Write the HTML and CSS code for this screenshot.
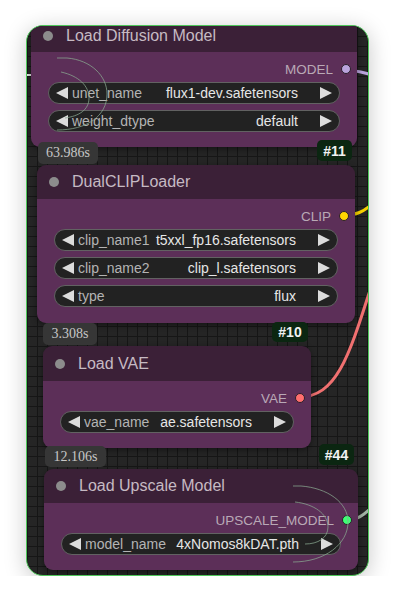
FILE: index.html
```html
<!DOCTYPE html>
<html>
  <head>
    <meta http-equiv="Content-Type" content="text/html; charset=utf-8" />
    <meta name="viewport" content="width=device-width, initial-scale=1" />
    <title>workflow</title>
    <link rel="stylesheet" href="styles.css">
  </head>
  <body>
    <div class="canvas">
      <svg class="wires" width="341" height="549" viewBox="0 0 341 549">
        <path d="M-2,49 L4,49" stroke="#e8e8e8" stroke-width="2" fill="none" />
        <path d="M316,44 C330,44 334,46 345,49" stroke="#b9a3dc" stroke-width="3" fill="none" />
        <path d="M316,189 C330,189 336,186 345,178" stroke="#f5d000" stroke-width="3" fill="none" />
        <path d="M272,371 C310,371 322,330 345,258" stroke="#f07070" stroke-width="3" fill="none" />
        <path d="M318,494 C330,494 336,490 345,481" stroke="#a3b3a5" stroke-width="3" fill="none" />
      </svg>

      <div class="node n1">
        <div class="title"><span class="dot"></span>Load Diffusion Model</div>
        <div class="body">
          <div class="output">MODEL <span class="slot model"></span></div>
          <div class="widget">
            <span class="arrow left"></span><span class="label">unet_name</span>
            <span class="value">flux1-dev.safetensors</span><span class="arrow right"></span>
          </div>
          <div class="widget">
            <span class="arrow left"></span><span class="label">weight_dtype</span>
            <span class="value">default</span><span class="arrow right"></span>
          </div>
        </div>
      </div>
      <div class="badge time t1">63.986s</div>
      <div class="badge id i1">#11</div>

      <div class="node n2">
        <div class="title"><span class="dot"></span>DualCLIPLoader</div>
        <div class="body">
          <div class="output">CLIP <span class="slot clip"></span></div>
          <div class="widget">
            <span class="arrow left"></span><span class="label">clip_name1</span>
            <span class="value">t5xxl_fp16.safetensors</span><span class="arrow right"></span>
          </div>
          <div class="widget">
            <span class="arrow left"></span><span class="label">clip_name2</span>
            <span class="value">clip_l.safetensors</span><span class="arrow right"></span>
          </div>
          <div class="widget">
            <span class="arrow left"></span><span class="label">type</span>
            <span class="value">flux</span><span class="arrow right"></span>
          </div>
        </div>
      </div>
      <div class="badge time t2">3.308s</div>
      <div class="badge id i2">#10</div>

      <div class="node n3">
        <div class="title"><span class="dot"></span>Load VAE</div>
        <div class="body">
          <div class="output">VAE <span class="slot vae"></span></div>
          <div class="widget">
            <span class="arrow left"></span><span class="label">vae_name</span>
            <span class="value">ae.safetensors</span><span class="arrow right"></span>
          </div>
        </div>
      </div>
      <div class="badge time t3">12.106s</div>
      <div class="badge id i3">#44</div>

      <div class="node n4">
        <div class="title"><span class="dot"></span>Load Upscale Model</div>
        <div class="body">
          <div class="output">UPSCALE_MODEL <span class="slot upscale"></span></div>
          <div class="widget">
            <span class="arrow left"></span><span class="label">model_name</span>
            <span class="value">4xNomos8kDAT.pth</span><span class="arrow right"></span>
          </div>
        </div>
      </div>

      <svg class="marks" width="341" height="549" viewBox="0 0 341 549">
        <path d="M30,32 L40,32 C64,34 80,50 80,68 C80,90 60,104 30,104" />
        <path d="M34,46 C52,50 62,60 62,72 C62,84 52,90 38,92" />
        <path d="M266,460 L274,460 C300,462 321,476 321,496 C321,518 298,536 266,536" />
        <path d="M268,476 C287,478 301,488 301,501 C301,512 291,518 278,518" />
      </svg>
    </div>
  </body>
</html>
```

FILE: styles.css
```css
body {
  margin: 0;
  background: #ffffff;
  font-family: "Liberation Sans", Arial, sans-serif;
}
.canvas {
  position: relative;
  margin: 25px 0 0 26px;
  width: 341px;
  height: 549px;
  border: 1px solid #4fc65a;
  border-radius: 17px;
  overflow: hidden;
  background-color: #252525;
  background-image:
    linear-gradient(#161616 1px, transparent 1px),
    linear-gradient(90deg, #161616 1px, transparent 1px);
  background-size: 10px 10px;
  box-shadow: 0 4px 22px rgba(0, 0, 0, 0.22);
}
.wires, .marks {
  position: absolute;
  left: 0;
  top: 0;
}
.wires {
  z-index: 0;
}
.marks {
  z-index: 4;
}
.marks path {
  fill: none;
  stroke: #8aa890;
  stroke-width: 1;
  opacity: 0.75;
}

/* nodes */
.node {
  position: absolute;
  z-index: 1;
  border-radius: 9px;
  overflow: hidden;
  box-shadow: 0 2px 6px rgba(0, 0, 0, 0.45);
}
.n1 { left: 4px; top: -7px; width: 326px; }
.n2 { left: 10px; top: 139px; width: 318px; }
.n3 { left: 16px; top: 320px; width: 268px; }
.n4 { left: 17px; top: 443px; width: 314px; }

.title {
  display: flex;
  align-items: center;
  height: 33px;
  padding-left: 12px;
  background: #3b2037;
  color: #c6bac3;
  font-size: 16px;
}
.n2 .title, .n4 .title { height: 34px; }
.n3 .title { height: 35px; }
.title .dot {
  width: 10px;
  height: 10px;
  border-radius: 50%;
  background: #8c8c8c;
  margin-right: 13px;
}
.body {
  display: flex;
  flex-direction: column;
  gap: 6px;
  padding: 6px 17px 15px 17px;
  background: #5c2f58;
}
.n2 .body { padding-bottom: 16px; }
.output {
  display: flex;
  align-items: center;
  justify-content: flex-end;
  height: 22px;
  margin: 0 -11px -4px 0;
  color: #b9a9b6;
  font-size: 13.5px;
}
.slot {
  width: 8px;
  height: 8px;
  border-radius: 50%;
  margin-left: 8px;
  border: 1.5px solid #2a1f2a;
}
.slot.model { background: #b9a3dc; }
.slot.clip { background: #ffd500; }
.slot.vae { background: #ff6e6e; }
.slot.upscale { background: #3dff74; }

.widget {
  display: flex;
  align-items: center;
  height: 22px;
  box-sizing: border-box;
  padding: 0 7px;
  border: 1px solid #626262;
  border-radius: 11px;
  background: #222222;
  font-size: 14px;
  white-space: nowrap;
}
.widget .label {
  margin-left: 4px;
  color: #b4b4b4;
}
.widget .value {
  flex: 1;
  text-align: right;
  margin-right: 22px;
  color: #e6e6e6;
}
.arrow {
  width: 0;
  height: 0;
  border-top: 6px solid transparent;
  border-bottom: 6px solid transparent;
}
.arrow.left {
  border-right: 12px solid #dcdcdc;
}
.arrow.right {
  border-left: 12px solid #dcdcdc;
}

/* badges */
.badge {
  position: absolute;
  z-index: 3;
  box-sizing: border-box;
  display: flex;
  align-items: center;
  justify-content: center;
  border-radius: 5px;
}
.badge.time {
  background: #363636;
  color: #c6c6c6;
  font-family: "Liberation Serif", "Times New Roman", serif;
  font-size: 14px;
}
.badge.id {
  background: #0b2611;
  color: #f2f2f2;
  font-weight: bold;
  font-size: 14px;
}
.t1 { left: 11px; top: 116px; width: 60px; height: 22px; }
.i1 { left: 290px; top: 114px; width: 35px; height: 21px; }
.t2 { left: 16px; top: 297px; width: 54px; height: 22px; }
.i2 { left: 245px; top: 296px; width: 36px; height: 20px; }
.t3 { left: 18px; top: 420px; width: 61px; height: 21px; }
.i3 { left: 292px; top: 418px; width: 35px; height: 21px; }
```
